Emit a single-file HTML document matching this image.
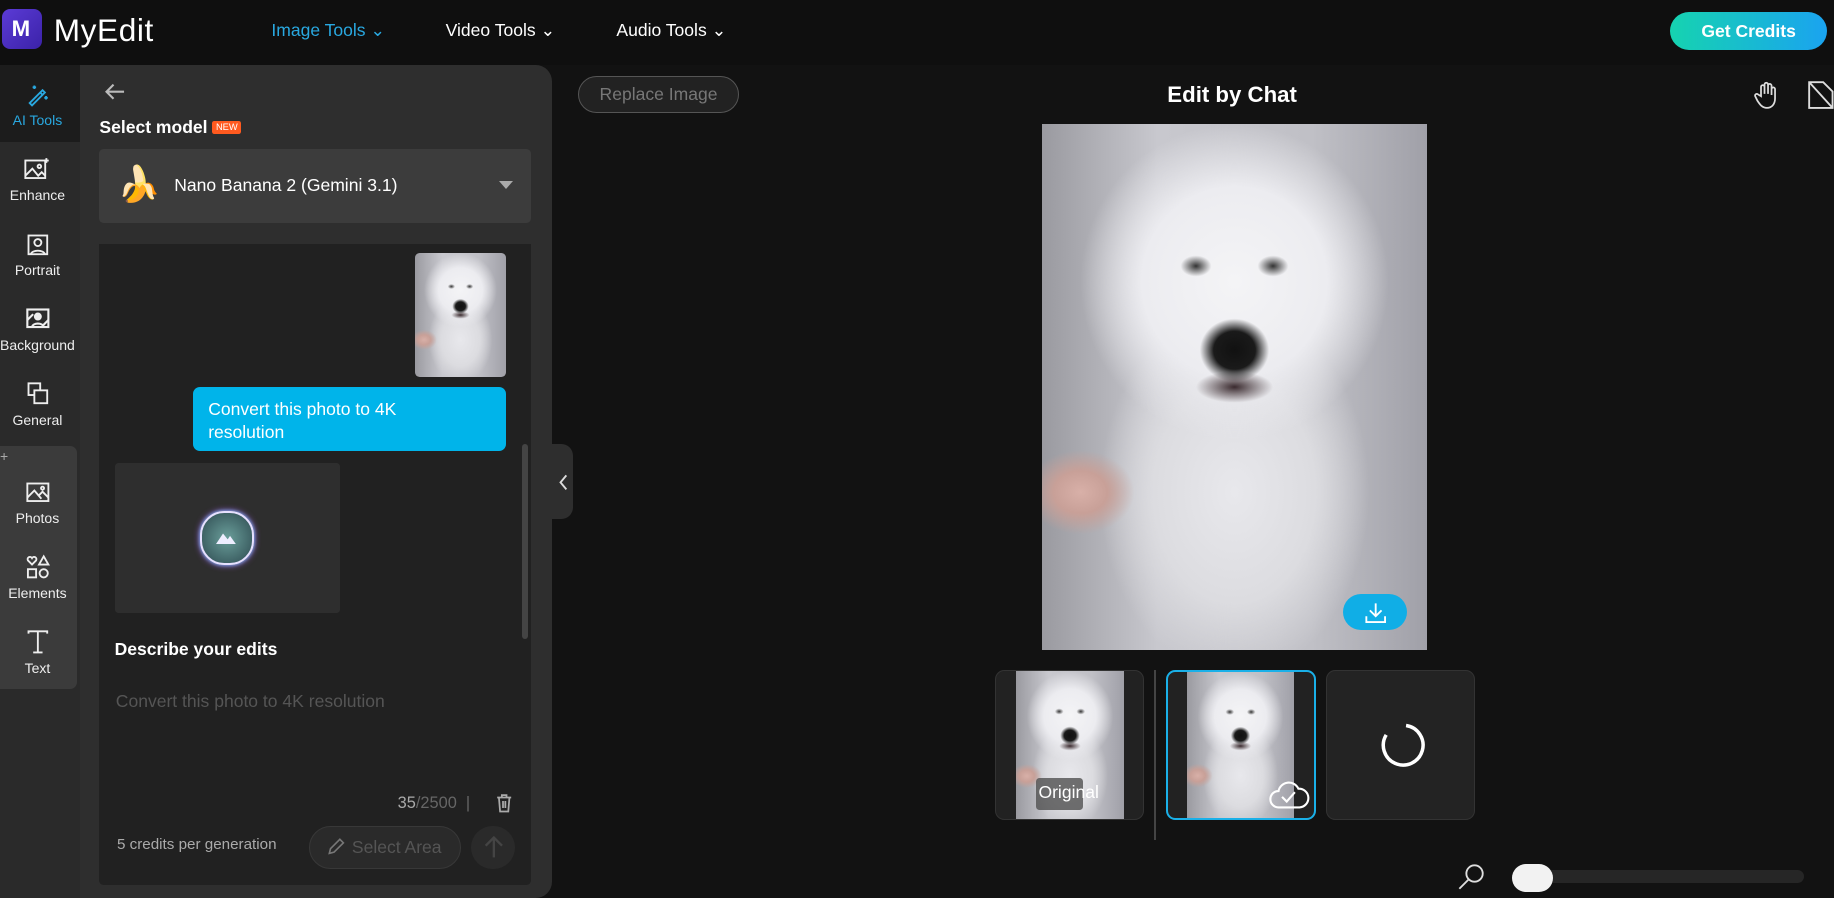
<!DOCTYPE html>
<html><head><meta charset="utf-8"><style>
*{margin:0;padding:0;box-sizing:border-box}
html,body{width:1834px;height:898px;overflow:hidden;background:#121212}
body{font-family:"Liberation Sans",sans-serif;color:#fff}
#w{zoom:1.16964;width:1568px;height:768px;position:relative;background:#121212}
.a{position:absolute}
.top{left:0;top:0;width:1568px;height:56px;background:#0f0f0f}
.nav{top:17px;font-size:15px}
.rail{left:0;top:56px;width:68px;height:712px;background:#2a2a2a}
.ri{position:absolute;left:0;width:64px;text-align:center;font-size:12px;color:#eee}
.ri svg{display:block;margin:0 auto 4px}
.dog{background:
radial-gradient(ellipse 9% 6% at 50% 43%,#111 0,#1a1a1a 60%,transparent 100%),
radial-gradient(ellipse 4% 2% at 40% 27%,#333 0,transparent 100%),
radial-gradient(ellipse 4% 2% at 60% 27%,#333 0,transparent 100%),
radial-gradient(ellipse 10% 3% at 50% 50%,#3a2a2e 0,transparent 100%),
radial-gradient(ellipse 14% 8% at 10% 70%,#d8b0a8 0,#c8a098 50%,transparent 100%),
radial-gradient(ellipse 40% 30% at 50% 30%,#f4f4f6 0,#ececf0 60%,transparent 100%),
radial-gradient(ellipse 35% 35% at 50% 70%,#e8e8ec 0,#dcdce0 60%,transparent 100%),
linear-gradient(90deg,#9a9aa0,#c8c8ce 30%,#c0c0c6 70%,#a0a0a8)}
</style></head><body><div id="w">
<div class="a top"></div>
<div class="a" style="left:2px;top:8px;width:34px;height:34px;border-radius:7px;background:linear-gradient(135deg,#5b3bd6,#3b22a8)"><span style="position:absolute;left:8px;top:6px;font-weight:bold;font-size:19px">M</span></div>
<div class="a" style="left:46px;top:10px;font-size:27px;letter-spacing:.5px">MyEdit</div>
<div class="a nav" style="left:232px;color:#29a8e0">Image Tools ⌄</div>
<div class="a nav" style="left:381px">Video Tools ⌄</div>
<div class="a nav" style="left:527px">Audio Tools ⌄</div>
<div class="a" style="left:1428px;top:10px;width:134px;height:33px;border-radius:17px;background:linear-gradient(90deg,#16d3b0,#1aa3f0);font-weight:bold;font-size:15px;text-align:center;line-height:33px">Get Credits</div>

<div class="a rail"></div>
<div class="a" style="left:0;top:56px;width:68px;height:65px;background:#1c1c1c"></div>
<div class="a" style="left:0;top:381px;width:66px;height:208px;background:#3b3b3b;border-radius:0 6px 6px 0"></div>
<div class="ri" style="top:70px;color:#29a8e0"><svg width="22" height="22" viewBox="0 0 22 22" fill="none" stroke="#29a8e0" stroke-width="1.6"><path d="M4 18L15 7l2 2L6 20zM13 9l2 2M8 3v3M6.5 4.5h3M18 12v3M16.5 13.5h3"/></svg>AI Tools</div>
<div class="ri" style="top:134px"><svg width="24" height="22" viewBox="0 0 24 22" fill="none" stroke="#eee" stroke-width="1.6"><rect x="2" y="3" width="17" height="15"/><path d="M2 16l6-6 5 6 3-3 3 3"/><circle cx="14" cy="8" r="1.5"/><path d="M20 1v4M18 3h4"/></svg>Enhance</div>
<div class="ri" style="top:198px"><svg width="22" height="22" viewBox="0 0 22 22" fill="none" stroke="#eee" stroke-width="1.6"><rect x="3" y="3" width="16" height="16"/><circle cx="11" cy="9" r="3"/><path d="M5 19c1-4 11-4 12 0"/></svg>Portrait</div>
<div class="ri" style="top:262px"><svg width="22" height="22" viewBox="0 0 22 22" fill="none" stroke="#eee" stroke-width="1.8"><rect x="2" y="3" width="18" height="15"/><circle cx="11" cy="9" r="2.5" fill="#eee"/><path d="M6 18c1-4 9-4 10 0M2 12l5-5M15 17l5-5"/></svg>Background</div>
<div class="ri" style="top:326px"><svg width="22" height="22" viewBox="0 0 22 22" fill="none" stroke="#eee" stroke-width="1.6"><rect x="3" y="2" width="10" height="10"/><rect x="8" y="8" width="11" height="11" fill="#2a2a2a"/></svg>General</div>
<div class="a" style="left:0;top:383px;font-size:12px;color:#aaa">+</div>
<div class="ri" style="top:410px"><svg width="22" height="22" viewBox="0 0 22 22" fill="none" stroke="#eee" stroke-width="1.6"><rect x="2" y="3" width="18" height="15"/><path d="M2 15l6-6 6 7M12 13l3-3 5 5"/><circle cx="15" cy="7" r="1.3"/></svg>Photos</div>
<div class="ri" style="top:474px"><svg width="22" height="22" viewBox="0 0 22 22" fill="none" stroke="#eee" stroke-width="1.6"><path d="M6 9L2.5 5.5a2 2 0 013.5-2 2 2 0 013.5 2z"/><path d="M16 2l4 7h-8z"/><rect x="2.5" y="13" width="7" height="7"/><circle cx="16" cy="16.5" r="3.5"/></svg>Elements</div>
<div class="ri" style="top:538px"><svg width="22" height="22" viewBox="0 0 22 22" fill="none" stroke="#eee" stroke-width="1.6"><path d="M3 4V2h16v2M11 2v18M7 20h8"/></svg>Text</div>

<div class="a" style="left:68px;top:56px;width:404px;height:712px;background:#2e2e2e;border-radius:0 14px 14px 0"></div>
<svg class="a" style="left:88px;top:68px" width="20" height="20" viewBox="0 0 20 20" fill="none" stroke="#bbb" stroke-width="1.8"><path d="M18 10H3M9 4l-6 6 6 6"/></svg>
<div class="a" style="left:85px;top:100px;font-size:15px;font-weight:bold">Select model <span style="background:#ff5a1f;font-size:8px;padding:1px 3px;border-radius:2px;vertical-align:2px;font-weight:normal">NEW</span></div>
<div class="a" style="left:85px;top:127px;width:369px;height:64px;background:#3c3c3c;border-radius:4px"></div>
<div class="a" style="left:100px;top:140px;font-size:30px;line-height:36px">🍌</div>
<div class="a" style="left:149px;top:150px;font-size:15px">Nano Banana 2 (Gemini 3.1)</div>
<div class="a" style="left:427px;top:155px;border:6px solid transparent;border-top:7px solid #aaa"></div>
<div class="a" style="left:85px;top:209px;width:369px;height:548px;background:#212121;border-radius:0 0 4px 4px"></div>
<div class="a dog" style="left:355px;top:216px;width:78px;height:106px;border-radius:4px"></div>
<div class="a" style="left:165px;top:331px;width:268px;height:55px;background:#00b4ea;border-radius:6px;padding:9px 13px;font-size:15px;line-height:20px">Convert this photo to 4K<br>resolution</div>
<div class="a" style="left:446px;top:380px;width:5px;height:166px;background:#444;border-radius:3px"></div>
<div class="a" style="left:98px;top:396px;width:193px;height:128px;background:#2e2e2e;border-radius:3px"></div>
<div class="a" style="left:171px;top:437px;width:46px;height:46px;border-radius:45%;background:radial-gradient(circle,#6a9e9a,#2d4a50);border:2px solid #e6e0ff;box-shadow:0 0 6px #b06aff,0 0 3px #5fe"></div>
<svg class="a" style="left:185px;top:453px" width="18" height="12" viewBox="0 0 18 12"><path d="M0 12L6 3l4 5 2-3 5 7z" fill="#eef"/></svg>
<div class="a" style="left:98px;top:546px;font-size:15px;font-weight:bold">Describe your edits</div>
<div class="a" style="left:99px;top:591px;font-size:15px;color:#555">Convert this photo to 4K resolution</div>
<div class="a" style="left:340px;top:679px;font-size:14px;color:#666"><span style="color:#aaa">35</span>/2500 &nbsp;|</div>
<svg class="a" style="left:424px;top:679px" width="14" height="16" viewBox="0 0 14 16" fill="none" stroke="#aaa" stroke-width="1.5"><path d="M1 3h12M5 3V1h4v2M2.5 3l1 12h7l1-12M6 6v6M8 6v6"/></svg>
<div class="a" style="left:100px;top:715px;font-size:13px;color:#aaa">5 credits per generation</div>
<div class="a" style="left:264px;top:706px;width:130px;height:37px;border-radius:19px;background:#2a2a2a;border:1px solid #383838;color:#555;font-size:15px;line-height:35px;padding-left:36px">Select Area</div>
<svg class="a" style="left:280px;top:716px" width="16" height="16" viewBox="0 0 16 16" fill="none" stroke="#777" stroke-width="1.4"><path d="M2 14l1-4 8-8 3 3-8 8z"/></svg>
<div class="a" style="left:403px;top:706px;width:37px;height:37px;border-radius:50%;background:#2a2a2a"></div>
<svg class="a" style="left:411px;top:713px" width="22" height="22" viewBox="0 0 22 22" fill="none" stroke="#444" stroke-width="2"><path d="M11 20V3M4 10l7-7 7 7"/></svg>
<div class="a" style="left:472px;top:380px;width:18px;height:64px;background:#2e2e2e;border-radius:0 10px 10px 0"></div>
<svg class="a" style="left:476px;top:404px" width="10" height="16" viewBox="0 0 10 16" fill="none" stroke="#ddd" stroke-width="1.6"><path d="M8 2L3 8l5 6"/></svg>

<div class="a" style="left:494px;top:65px;width:138px;height:32px;border-radius:16px;border:1px solid #555;background:#222;color:#777;font-size:15px;text-align:center;line-height:30px">Replace Image</div>
<div class="a" style="left:998px;top:70px;font-size:19px;font-weight:bold">Edit by Chat</div>
<svg class="a" style="left:1500px;top:69px" width="22" height="24" viewBox="0 0 22 24" fill="none" stroke="#ddd" stroke-width="1.5"><path d="M6 13V5a1.5 1.5 0 013 0v6V3a1.5 1.5 0 013 0v8V4a1.5 1.5 0 013 0v8V7a1.5 1.5 0 013 0v8c0 5-3 8-7 8s-6-3-8-6l-2-4a1.5 1.5 0 012.5-1.5z"/></svg>
<svg class="a" style="left:1546px;top:69px" width="22" height="24" viewBox="0 0 22 24" fill="none" stroke="#ddd" stroke-width="1.6"><path d="M1 1h12l8 8v14H1zM1 1l20 22"/></svg>
<div class="a dog" style="left:891px;top:106px;width:329px;height:450px"></div>
<div class="a" style="left:1148px;top:508px;width:55px;height:31px;border-radius:16px;background:#10aee6"></div>
<svg class="a" style="left:1166px;top:514px" width="20" height="20" viewBox="0 0 20 20" fill="none" stroke="#fff" stroke-width="1.6"><path d="M10 2v11M5 8l5 5 5-5M2 13v5h16v-5"/></svg>

<div class="a" style="left:851px;top:573px;width:127px;height:128px;border-radius:8px;background:#222;border:1px solid #333;overflow:hidden"><div class="a dog" style="left:17px;top:0;width:92px;height:128px"></div><div class="a" style="left:34px;top:91px;width:40px;height:28px;background:rgba(80,80,80,.8);border-radius:3px"></div><div class="a" style="left:36px;top:95px;font-size:15px">Original</div></div>
<div class="a" style="left:987px;top:573px;width:1px;height:145px;background:#444"></div>
<div class="a" style="left:997px;top:573px;width:128px;height:128px;border-radius:8px;background:#222;border:2px solid #1ab0e8;overflow:hidden"><div class="a dog" style="left:16px;top:0;width:92px;height:126px"></div></div>
<svg class="a" style="left:1084px;top:664px" width="36" height="28" viewBox="0 0 36 28" fill="none" stroke="#fff" stroke-width="1.8"><path d="M9 26a7 7 0 010-14 9 9 0 0117-2 7 7 0 011 16z"/><path d="M12 17l4 4 7-8"/></svg>
<div class="a" style="left:1134px;top:573px;width:127px;height:128px;border-radius:8px;background:#232323;border:1px solid #333"></div>
<svg class="a" style="left:1178px;top:617px" width="40" height="40" viewBox="0 0 40 40" fill="none" stroke="#fff" stroke-width="3"><path d="M24 3a17 17 0 11-17 8"/></svg>
<svg class="a" style="left:1246px;top:738px" width="24" height="24" viewBox="0 0 24 24" fill="none" stroke="#ddd" stroke-width="1.6"><circle cx="15" cy="9" r="7"/><path d="M10 14l-8 8"/></svg>
<div class="a" style="left:1310px;top:744px;width:232px;height:11px;border-radius:6px;background:#262626"></div>
<div class="a" style="left:1293px;top:739px;width:35px;height:24px;border-radius:12px;background:#f2f2f2"></div>
</div></body></html>
